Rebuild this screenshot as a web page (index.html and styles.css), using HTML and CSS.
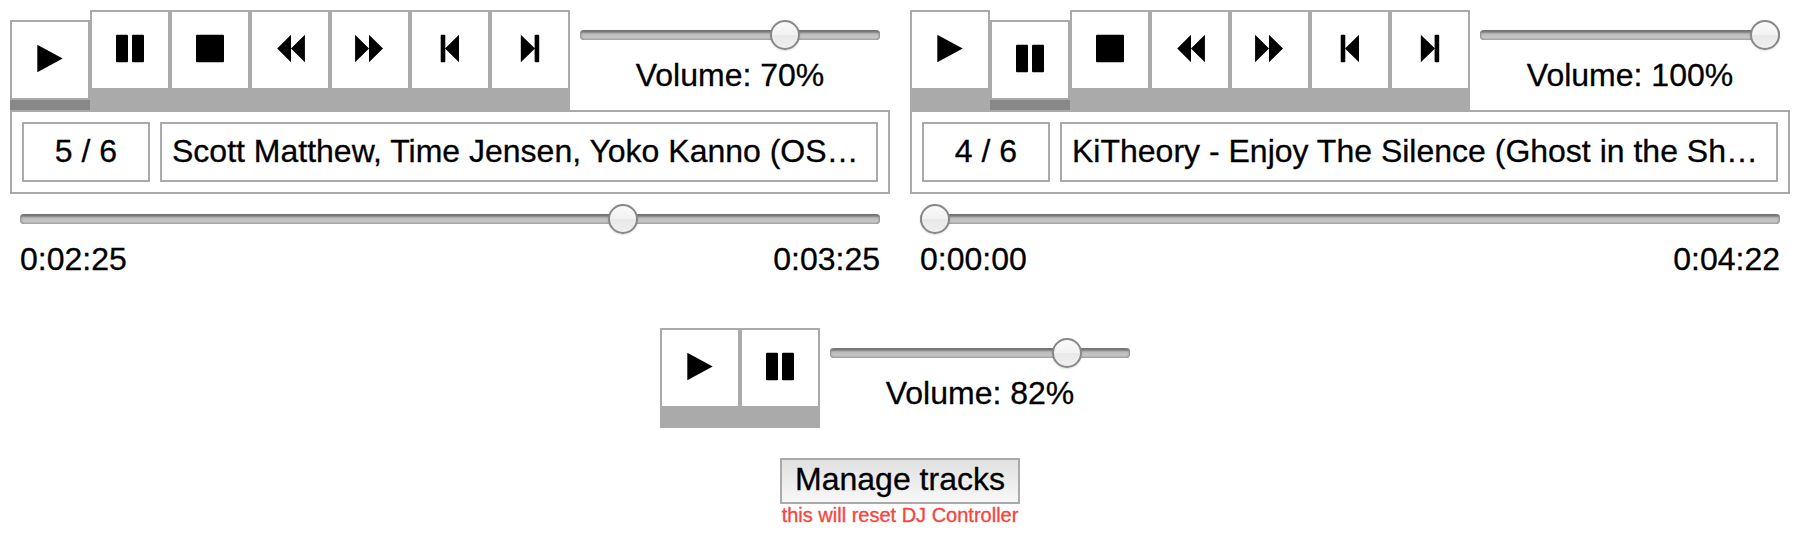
FILE: index.html
```html
<!DOCTYPE html>
<html lang="en">
<head>
<meta charset="utf-8">
<title>DJ Controller</title>
<link rel="stylesheet" href="styles.css">
</head>
<body>
<svg class="defs" width="0" height="0" aria-hidden="true">
  <symbol id="play" viewBox="2 2 76 76"><path d="M27.3 24.8 52.7 38.5 27.3 52.2Z"/></symbol>
  <symbol id="pause" viewBox="2 2 76 76"><rect x="26" y="24.8" width="12" height="27.4" rx="1"/><rect x="42" y="24.8" width="12" height="27.4" rx="1"/></symbol>
  <symbol id="stop" viewBox="2 2 76 76"><rect x="26" y="24.8" width="28" height="27.4" rx="1"/></symbol>
  <symbol id="rewind" viewBox="2 2 76 76"><path d="M27.2 38.5 41 24.8V52.2ZM41 38.5 54.9 24.8V52.2Z"/></symbol>
  <symbol id="forward" viewBox="2 2 76 76"><path d="M25.1 24.8 39 38.5 25.1 52.2ZM39 24.8 53 38.5 39 52.2Z"/></symbol>
  <symbol id="prev" viewBox="2 2 76 76"><rect x="30.7" y="24.8" width="4.6" height="27.4" rx="1"/><path d="M35 38.5 49 24.8V52.2Z"/></symbol>
  <symbol id="next" viewBox="2 2 76 76"><path d="M30.8 24.8 45 38.5 30.8 52.2Z"/><rect x="44.6" y="24.8" width="4.6" height="27.4" rx="1"/></symbol>
</svg>
<main class="decks">
  <section class="deck">
    <div class="controls">
      <div class="buttons">
        <button class="key pressed" aria-label="Play"><svg><use href="#play"/></svg></button>
        <button class="key" aria-label="Pause"><svg><use href="#pause"/></svg></button>
        <button class="key" aria-label="Stop"><svg><use href="#stop"/></svg></button>
        <button class="key" aria-label="Rewind"><svg><use href="#rewind"/></svg></button>
        <button class="key" aria-label="Fast forward"><svg><use href="#forward"/></svg></button>
        <button class="key" aria-label="Previous"><svg><use href="#prev"/></svg></button>
        <button class="key" aria-label="Next"><svg><use href="#next"/></svg></button>
      </div>
      <div class="volume">
        <div class="slider"><span class="thumb" style="margin-left:190px"></span></div>
        <div class="volume-label">Volume: 70%</div>
      </div>
    </div>
    <div class="info">
      <div class="count">5 / 6</div>
      <div class="title">Scott Matthew, Time Jensen, Yoko Kanno (OS…</div>
    </div>
    <div class="seek">
      <div class="slider"><span class="thumb" style="margin-left:588px"></span></div>
      <div class="times"><span>0:02:25</span><span>0:03:25</span></div>
    </div>
  </section>
  <section class="deck">
    <div class="controls">
      <div class="buttons">
        <button class="key" aria-label="Play"><svg><use href="#play"/></svg></button>
        <button class="key pressed" aria-label="Pause"><svg><use href="#pause"/></svg></button>
        <button class="key" aria-label="Stop"><svg><use href="#stop"/></svg></button>
        <button class="key" aria-label="Rewind"><svg><use href="#rewind"/></svg></button>
        <button class="key" aria-label="Fast forward"><svg><use href="#forward"/></svg></button>
        <button class="key" aria-label="Previous"><svg><use href="#prev"/></svg></button>
        <button class="key" aria-label="Next"><svg><use href="#next"/></svg></button>
      </div>
      <div class="volume">
        <div class="slider"><span class="thumb" style="margin-left:270px"></span></div>
        <div class="volume-label">Volume: 100%</div>
      </div>
    </div>
    <div class="info">
      <div class="count">4 / 6</div>
      <div class="title">KiTheory - Enjoy The Silence (Ghost in the Sh…</div>
    </div>
    <div class="seek">
      <div class="slider"><span class="thumb" style="margin-left:0px"></span></div>
      <div class="times"><span>0:00:00</span><span>0:04:22</span></div>
    </div>
  </section>
</main>
<section class="master">
  <div class="controls">
    <div class="buttons">
      <button class="key" aria-label="Play"><svg><use href="#play"/></svg></button>
      <button class="key" aria-label="Pause"><svg><use href="#pause"/></svg></button>
    </div>
    <div class="volume">
      <div class="slider"><span class="thumb" style="margin-left:222px"></span></div>
      <div class="volume-label">Volume: 82%</div>
    </div>
  </div>
</section>
<footer class="manage">
  <button class="manage-button">Manage tracks</button>
  <div class="warning">this will reset DJ Controller</div>
</footer>
</body>
</html>
```
FILE: styles.css
```css
* {
  box-sizing: border-box;
}

body {
  margin: 0;
  padding: 10px;
  background: #fff;
  color: #000;
  font: 32px/37px "Liberation Sans", Arial, Helvetica, sans-serif;
  font-kerning: normal;
  -webkit-text-stroke: 0.3px currentColor;
}

.defs {
  display: block;
}

.decks {
  display: grid;
  grid-template-columns: 880px 880px;
  gap: 20px;
  height: 318px;
}

.controls {
  display: flex;
  height: 100px;
}

.buttons {
  display: flex;
}

.key {
  display: block;
  width: 80px;
  height: 80px;
  padding: 0;
  border: 2px solid #aaa;
  border-radius: 0;
  background: #fff;
  box-shadow: 0 20px 0 #aaa;
}

.key.pressed {
  margin-top: 10px;
  box-shadow: 0 10px 0 #888;
}

.key svg {
  display: block;
  width: 76px;
  height: 76px;
}

.volume {
  width: 320px;
  padding: 10px;
}

.volume-label {
  margin-top: 7px;
  text-align: center;
}

.slider {
  position: relative;
  height: 30px;
  display: flex;
}

.slider::before {
  content: "";
  position: absolute;
  inset: 10px 0;
  border-radius: 4px;
  background: linear-gradient(#6c6c6c, #808080 20%, #b0b0b0 36%, #c2c2c2 50%, #c5c5c5 80%, #a9a9a9 90%, #aaa);
  box-shadow: inset 2px 0 2px -1px #888, inset -2px 0 2px -1px #888;
}

.thumb {
  position: relative;
  width: 30px;
  height: 30px;
  border: 2px solid #888;
  border-radius: 50%;
  background: linear-gradient(#fafafa, #f2f2f2 50%, #e9e9e9 51%, #efefef);
  box-shadow: 0 1px 2px rgba(0, 0, 0, 0.13);
}

.info {
  display: flex;
  gap: 10px;
  height: 84px;
  padding: 10px;
  border: 2px solid #aaa;
}

.count,
.title {
  height: 60px;
  padding: 9px 10px;
  border: 2px solid #aaa;
  white-space: nowrap;
}

.count {
  width: 128px;
  text-align: center;
}

.title {
  flex: 1;
  min-width: 0;
  overflow: hidden;
}

.seek {
  padding: 10px;
}

.times {
  display: flex;
  justify-content: space-between;
  margin-top: 7px;
}

.master {
  display: flex;
  justify-content: center;
  height: 130px;
}

.manage {
  display: flex;
  flex-direction: column;
  align-items: center;
}

.manage-button {
  width: 240px;
  height: 46px;
  padding: 0 0 4px;
  border: 2px solid #aaa;
  border-radius: 0;
  background: linear-gradient(#e0e0e0, #f8f8f8);
  color: #000;
  font: inherit;
  white-space: nowrap;
}

.warning {
  color: #f9423a;
  font-size: 20px;
  line-height: 23px;
}
```
